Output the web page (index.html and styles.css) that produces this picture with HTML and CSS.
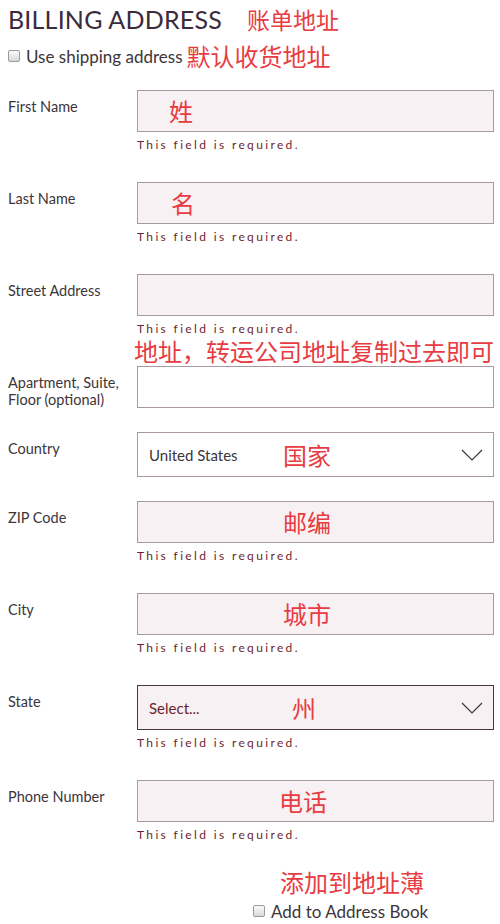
FILE: index.html
```html
<!DOCTYPE html>
<html lang="en">
<head>
<meta charset="utf-8">
<title>Billing Address</title>
<link rel="stylesheet" href="styles.css">
</head>
<body>
<main class="page">
  <div class="title-row">
    <h1 class="title">BILLING ADDRESS</h1>
    <span class="note note-title">账单地址</span>
  </div>
  <label class="check-row check-top">
    <span class="checkbox"></span>
    <span class="check-text">Use shipping address</span>
    <span class="note note-check">默认收货地址</span>
  </label>

  <div class="form">
    <div class="row">
      <div class="label">First Name</div>
      <div class="field">
        <div class="box"><span class="note note-in at-first">姓</span></div>
        <div class="error">This field is required.</div>
      </div>
    </div>
    <div class="row">
      <div class="label">Last Name</div>
      <div class="field">
        <div class="box"><span class="note note-in at-last">名</span></div>
        <div class="error">This field is required.</div>
      </div>
    </div>
    <div class="row row-tight">
      <div class="label">Street Address</div>
      <div class="field">
        <div class="box"></div>
        <div class="error">This field is required.</div>
        <div class="note note-street">地址，转运公司地址复制过去即可</div>
      </div>
    </div>
    <div class="row">
      <div class="label label-two">Apartment, Suite,<br>Floor (optional)</div>
      <div class="field">
        <div class="box box-white"></div>
      </div>
    </div>
    <div class="row">
      <div class="label">Country</div>
      <div class="field">
        <div class="box box-white select">
          <span class="select-text">United States</span>
          <span class="note note-in at-country">国家</span>
          <svg class="chevron" width="22" height="12" viewBox="0 0 22 12"><polyline points="1,1 11,11 21,1" fill="none" stroke="#3d3539" stroke-width="1.2"/></svg>
        </div>
      </div>
    </div>
    <div class="row">
      <div class="label">ZIP Code</div>
      <div class="field">
        <div class="box"><span class="note note-in at-zip">邮编</span></div>
        <div class="error">This field is required.</div>
      </div>
    </div>
    <div class="row">
      <div class="label">City</div>
      <div class="field">
        <div class="box"><span class="note note-in at-city">城市</span></div>
        <div class="error">This field is required.</div>
      </div>
    </div>
    <div class="row">
      <div class="label">State</div>
      <div class="field">
        <div class="box select select-active">
          <span class="select-text select-placeholder">Select...</span>
          <span class="note note-in at-state">州</span>
          <svg class="chevron" width="22" height="12" viewBox="0 0 22 12"><polyline points="1,1 11,11 21,1" fill="none" stroke="#3d3539" stroke-width="1.2"/></svg>
        </div>
        <div class="error">This field is required.</div>
      </div>
    </div>
    <div class="row">
      <div class="label">Phone Number</div>
      <div class="field">
        <div class="box"><span class="note note-in at-phone">电话</span></div>
        <div class="error">This field is required.</div>
      </div>
    </div>
  </div>

  <div class="footer">
    <div class="note note-footer">添加到地址薄</div>
    <label class="check-row check-footer">
      <span class="checkbox"></span>
      <span class="check-text">Add to Address Book</span>
    </label>
  </div>
</main>
</body>
</html>
```

FILE: styles.css
```css
body {
  margin: 0;
  background: #ffffff;
  color: #3d3539;
  font-family: Lato, "Noto Sans CJK SC", sans-serif;
}

.page {
  padding: 0 0 0 8px;
  width: 486px;
}

.note {
  color: #e83c42;
  font-family: "Noto Sans CJK SC", sans-serif;
  font-size: 24px;
  line-height: 1;
}

.title-row {
  display: flex;
  align-items: center;
  height: 36px;
  padding-top: 1px;
}

.title {
  margin: 0;
  font-size: 25px;
  font-weight: 400;
  letter-spacing: 0.2px;
  color: #3b2b3c;
  line-height: 36px;
}

.note-title {
  margin-left: 25px;
  font-size: 23px;
}

.check-row {
  display: flex;
  align-items: center;
  height: 32px;
}

.check-top {
  margin-top: 3px;
}

.checkbox {
  width: 10px;
  height: 10px;
  flex: none;
  border: 1px solid #9a9a9a;
  border-radius: 2px;
  background: linear-gradient(#fbfbfb, #d8d8d8);
}

.check-text {
  margin-left: 6px;
  font-size: 17px;
  color: #3d3539;
}

.note-check {
  margin-left: 4px;
}

.form {
  margin-top: 18px;
}

.row {
  display: flex;
  margin-bottom: 24px;
}

.row-tight {
  margin-bottom: 3px;
}

.label {
  width: 129px;
  flex: none;
  font-size: 14.5px;
  line-height: 18px;
  padding-top: 8px;
}

.label-two {
  line-height: 17px;
}

.field {
  width: 357px;
}

.box {
  position: relative;
  box-sizing: border-box;
  height: 42px;
  border: 1px solid #a8989f;
  background: #f7f1f3;
  display: flex;
  align-items: center;
  padding: 0 10px 0 11px;
}

.box-white {
  background: #ffffff;
}

.select {
  height: 45px;
  justify-content: space-between;
}

.select-active {
  border-color: #4a3540;
}

.select-text {
  font-size: 15px;
  color: #3d3539;
}

.select-placeholder {
  color: #6e1f2d;
}

.chevron {
  display: block;
}

.note-in {
  position: absolute;
  top: 50%;
  transform: translateY(-50%);
}

.at-first { left: 31px; }
.at-last { left: 33px; }
.at-country { left: 145px; }
.at-zip { left: 145px; }
.at-city { left: 145px; }
.at-state { left: 154px; }
.at-phone { left: 141px; }

.error {
  height: 26px;
  line-height: 26px;
  font-size: 12px;
  letter-spacing: 2.35px;
  color: #6e1f2d;
}

.note-street {
  margin-top: -4px;
  margin-left: -3px;
  font-size: 24px;
  line-height: 25px;
  white-space: nowrap;
}

.footer {
  margin-top: -4px;
}

.note-footer {
  margin-left: 272px;
  line-height: 28px;
}

.check-footer {
  margin-left: 245px;
  height: 30px;
}
```
